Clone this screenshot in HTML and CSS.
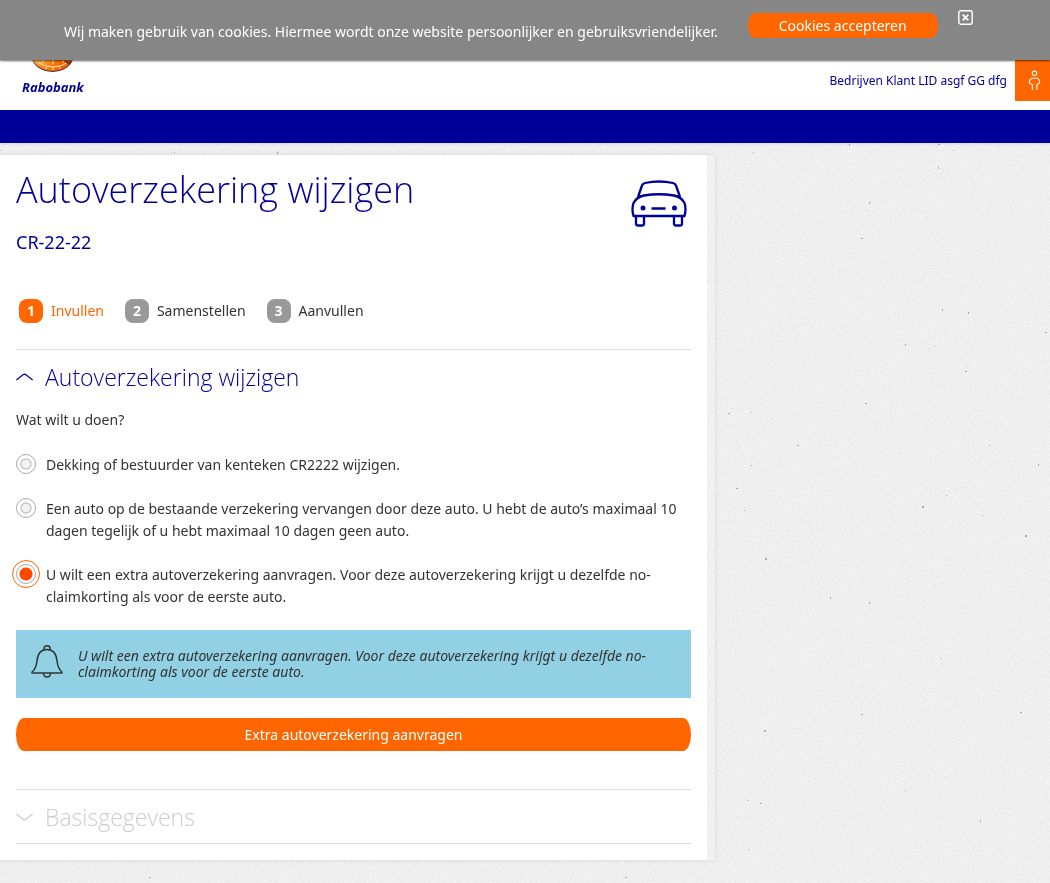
FILE: index.html
```html
<!DOCTYPE html>
<html lang="nl">
<head>
<meta charset="utf-8">
<meta name="viewport" content="width=device-width, initial-scale=1">
<title>Autoverzekering wijzigen</title>
<link rel="stylesheet" href="styles.css">
</head>
<body>
<svg class="paper" aria-hidden="true">
  <defs>
    <filter id="grain" x="0" y="0" width="100%" height="100%" color-interpolation-filters="sRGB">
      <feTurbulence type="fractalNoise" baseFrequency="0.6" numOctaves="2" seed="4"/>
      <feColorMatrix values="0.09 0 0 0 0.892  0.09 0 0 0 0.892  0.09 0 0 0 0.892  0 0 0 0 1"/>
    </filter>
  </defs>
  <rect width="100%" height="100%" filter="url(#grain)"/>
  <path fill="#aaa" d="M942 309h1v2h-1zM968 312h1v2h-1zM1045 332h2v1h-2zM905 344h1v2h-1zM934 346h1v1h-1zM965 371h2v1h-2zM865 403h2v1h-2zM728 413h2v1h-2zM751 412h1v1h-1zM797 445h2v1h-2zM989 445h1v1h-1zM1038 464h1v2h-1zM736 488h2v1h-2zM751 465h1v1h-1zM922 506h2v2h-2zM946 495h1v1h-1zM1025 535h2v2h-2zM982 515h1v1h-1zM744 510h1v1h-1zM861 238h2v1h-2zM869 202h1v2h-1zM753 152h1v1h-1zM849 144h1v2h-1zM938 144h2v1h-2zM953 150h1v1h-1zM938 167h1v2h-1zM764 730h2v2h-2zM747 800h1v1h-1zM760 803h2v1h-2zM748 849h1v1h-1zM625 877h2v1h-2zM149 877h2v1h-2zM861 714h2v1h-2zM765 558h2v2h-2zM830 597h1v2h-1zM1 150h1v1h-1zM174 152h1v1h-1zM277 152h1v2h-1zM869 602h1v2h-1zM941 658h1v1h-1zM1020 712h2v1h-2zM905 790h1v1h-1zM980 820h1v2h-1z"/>
</svg>

<aside class="cookies" aria-label="Cookies">
  <p class="cookies-text">Wij maken gebruik van cookies. Hiermee wordt onze website persoonlijker en gebruiksvriendelijker.</p>
  <button class="button cookies-accept" type="button">Cookies accepteren</button>
  <button class="cookies-close" type="button" aria-label="Sluiten">
    <svg width="15" height="15" viewBox="0 0 15 15" fill="none" stroke="#fff"><rect x=".8" y=".8" width="13.4" height="13.4" rx="2" stroke-width="1.4"/><path d="M4.700 4.700l5.600 5.600M10.300 4.700l-5.600 5.600" stroke-width="1.800"/></svg>
  </button>
</aside>

<header class="header">
  <a class="logo" href="#">
    <svg width="42" height="42" viewBox="0 0 42 42" aria-hidden="true">
      <defs><radialGradient id="orb" cx=".2" cy=".62" r=".65"><stop offset="0" stop-color="#ffc365"/><stop offset=".4" stop-color="#f98512"/><stop offset="1" stop-color="#f25e00"/></radialGradient></defs>
      <ellipse cx="20.500" cy="27" rx="20.500" ry="15" fill="#4c2b3c"/>
      <ellipse cx="20.500" cy="26" rx="20.500" ry="15" fill="url(#orb)"/>
      <path d="M5 32q16 10 32 0M21 28v6M21 37v3M12 29l-2 4M30 29l2 4M15 36l-1 3M27 36l1 3" fill="none" stroke="#ffe2b5"/>
      <path d="M32 31l8 1-3 3z" fill="#703324"/>
    </svg>
    <span class="logo-name">Rabobank</span>
  </a>
  <div class="account">
    <span class="account-name">Bedrijven Klant LID asgf GG dfg</span>
    <button class="account-button" type="button" aria-label="Profiel">
      <svg width="13" height="21" viewBox="0 0 13 21" fill="none" stroke="#fff" stroke-width="1.100" stroke-linecap="round"><circle cx="6.500" cy="3.300" r="2.200"/><path d="M4.300 19.500V14.500L1.300 13C1.300 11 2.600 8.200 4 8.200h5c1.400 0 2.700 2.800 2.700 4.800L8.900 14.500v5"/></svg>
    </button>
  </div>
</header>
<nav class="navbar" aria-label="Hoofdmenu"></nav>

<div class="sheet">
<main class="card">
  <div class="title-row">
    <h1 class="title">Autoverzekering wijzigen</h1>
    <svg class="car" width="56" height="48" viewBox="0 0 56 48" fill="none" stroke="#009" stroke-width="2.300" stroke-linejoin="round" aria-hidden="true">
      <path d="M7 17L11 5.500Q12 3.500 14 3Q28 0 42 3Q44 3.500 45 5.500L49 17"/>
      <path d="M2.500 36Q.5 29 2.500 23Q5.500 17 13 15.500Q28 13 43 15.500Q50.500 17 53.500 23Q55.500 29 53.500 36Z"/>
      <path d="M5 36v7.500q0 2 2 2h4q2 0 2-2V36M43 36v7.500q0 2 2 2h4q2 0 2-2V36M20.500 28.500h14"/>
      <circle cx="12" cy="28" r="2.500" fill="#009" stroke="none"/><circle cx="43.500" cy="28" r="2.500" fill="#009" stroke="none"/>
    </svg>
  </div>
  <p class="plate">CR-22-22</p>

  <ol class="steps">
    <li class="step step-active"><span class="step-number">1</span>Invullen</li>
    <li class="step"><span class="step-number">2</span>Samenstellen</li>
    <li class="step"><span class="step-number">3</span>Aanvullen</li>
  </ol>

  <section class="section">
    <h2 class="section-title">
      <svg width="17" height="8" viewBox="0 0 17 8" fill="none" stroke="currentColor" stroke-width="1.300" aria-hidden="true"><path d="M.3 7L7 1.700Q8.500.6 10 1.700L16.700 7"/></svg>
      Autoverzekering wijzigen
    </h2>
    <fieldset class="choices">
      <legend class="question">Wat wilt u doen?</legend>
      <label class="choice"><input class="radio" type="radio" name="actie"><span>Dekking of bestuurder van kenteken CR2222 wijzigen.</span></label>
      <label class="choice"><input class="radio" type="radio" name="actie"><span>Een auto op de bestaande verzekering vervangen door deze auto. U hebt de auto’s maximaal 10 dagen tegelijk of u hebt maximaal 10 dagen geen auto.</span></label>
      <label class="choice"><input class="radio" type="radio" name="actie" checked><span>U wilt een extra autoverzekering aanvragen. Voor deze autoverzekering krijgt u dezelfde no-claimkorting als voor de eerste auto.</span></label>
    </fieldset>
    <div class="notice">
      <svg class="bell" width="32" height="33" viewBox="0 0 32 33" fill="none" stroke="#333" stroke-width="1.500" stroke-linejoin="round" aria-hidden="true"><path d="M13 5V3.500q0-2.700 3-2.700t3 2.700V5M1 28v-1q4-3 5-11Q7 4.500 16 4.500T26 16q1 8 5 11v1ZM12.500 28q0 4 3.500 4t3.500-4"/></svg>
      <p class="notice-text">U wilt een extra autoverzekering aanvragen. Voor deze autoverzekering krijgt u dezelfde no-claimkorting als voor de eerste auto.</p>
    </div>
    <button class="button submit" type="button">Extra autoverzekering aanvragen</button>
  </section>

  <section class="section section-closed">
    <h2 class="section-title">
      <svg width="17" height="8" viewBox="0 0 17 8" fill="none" stroke="currentColor" stroke-width="1.300" aria-hidden="true"><path d="M.3 1L7 6.300Q8.500 7.400 10 6.300L16.700 1"/></svg>
      Basisgegevens
    </h2>
  </section>
</main>
</div>
</body>
</html>
```
FILE: styles.css
```css
* {
  box-sizing: border-box;
}

body {
  margin: 0;
  background: #eee;
  color: #333;
  font: 14px/22px "Noto Sans", "Open Sans", sans-serif;
}

h1, h2, p, ol, fieldset {
  margin: 0;
  padding: 0;
}

button {
  border: 0;
  padding: 0;
  font: inherit;
  cursor: pointer;
}

svg {
  display: block;
  flex: none;
}

.paper {
  position: fixed;
  inset: 0;
  width: 100%;
  height: 100%;
  z-index: -1;
}

.button {
  background: #f60;
  color: #fff;
  text-align: center;
}

.cookies {
  position: fixed;
  top: 0;
  left: 0;
  right: 0;
  z-index: 2;
  display: flex;
  align-items: flex-start;
  height: 60px;
  padding: 10px 64px;
  background: #868686;
  box-shadow: 0 1px 2px rgba(0, 0, 0, 0.6);
  color: #fff;
}

.cookies-text {
  padding-top: 11px;
}

.cookies-accept {
  width: 190px;
  height: 25px;
  margin: 3px 20px 0 30px;
  border-radius: 7px / 12px;
}

.cookies-close {
  background: none;
}

.header {
  display: flex;
  justify-content: space-between;
  height: 110px;
  padding-left: 22px;
  background: #fff;
  color: #009;
}

.logo {
  display: flex;
  flex-direction: column;
  align-items: center;
  padding-top: 30px;
  color: #009;
  text-decoration: none;
}

.logo-name {
  padding-top: 4px;
  font: italic bold 13px/22px "Open Sans", sans-serif;
}

.account {
  display: flex;
  align-items: flex-end;
  gap: 8px;
  padding-bottom: 9px;
}

.account-name {
  padding-bottom: 9px;
  font-size: 12px;
}

.account-button {
  display: flex;
  justify-content: center;
  align-items: center;
  width: 35px;
  height: 41px;
  padding-left: 3px;
  background: #f60;
}

.navbar {
  height: 33px;
  background: #009;
  box-shadow: 0 1px 3px rgba(0, 0, 0, 0.1);
}

.sheet {
  width: 68.1%;
  margin: 12px 0 24px;
  padding-right: 8px;
  background: rgba(255, 255, 255, 0.1);
  box-shadow: 0 0 5px rgba(0, 0, 0, 0.1);
}

.card {
  padding: 12px 16px 16px;
  background: #fff;
}

.title-row {
  display: flex;
  justify-content: space-between;
  align-items: flex-start;
  height: 60px;
  color: #009;
}

.title,
.section-title {
  font-family: "Open Sans", "Noto Sans", sans-serif;
  font-weight: 300;
}

.title {
  font-size: 36px;
  line-height: 46px;
}

.car {
  margin: 13px 4px 0 0;
}

.plate {
  padding: 3px 0 1px;
  color: #009;
  font-size: 18px;
  line-height: 24px;
}

.steps {
  display: flex;
  gap: 21px;
  margin: 44px 3px 26px;
  list-style: none;
}

.step {
  display: flex;
  align-items: center;
  gap: 8px;
}

.step-number {
  width: 24px;
  height: 24px;
  border-radius: 8px;
  background: #999;
  color: #fff;
  font-weight: bold;
  line-height: 24px;
  text-align: center;
}

.step-active {
  color: #f60;
}

.step-active .step-number {
  background: #f60;
}

.section {
  border-top: 1px solid #ddd;
}

.section-title {
  display: flex;
  align-items: center;
  gap: 12px;
  height: 54px;
  color: #009;
  font-size: 23px;
}

.choices {
  border: 0;
}

.question {
  padding: 5px 0 0;
  margin-bottom: 23px;
}

.choice {
  display: flex;
  align-items: flex-start;
  gap: 10px;
  margin-bottom: 22px;
}

.radio {
  flex: none;
  appearance: none;
  width: 20px;
  height: 20px;
  margin: 0;
  border: 1px solid #aaa;
  border-radius: 50%;
  background: radial-gradient(circle, #f2f2f2 4px, #b4b4b4 5px, #fff 6px);
}

.radio:checked {
  background: radial-gradient(circle, #ff4800 6px, #fff 7px);
  outline: 1px solid #f60;
  outline-offset: 3px;
}

.notice {
  display: flex;
  align-items: flex-start;
  gap: 15px;
  min-height: 68px;
  padding: 15px;
  background: #91d1e3;
}

.notice-text {
  padding-top: 3px;
  font-style: italic;
  line-height: 16px;
}

.submit {
  display: block;
  width: 100%;
  height: 33px;
  margin: 20px 0 38px;
  border-radius: 8px / 16px;
}

.section-closed {
  border-bottom: 1px solid #ddd;
}

.section-closed .section-title {
  height: 53px;
  color: #ccc;
}
```
